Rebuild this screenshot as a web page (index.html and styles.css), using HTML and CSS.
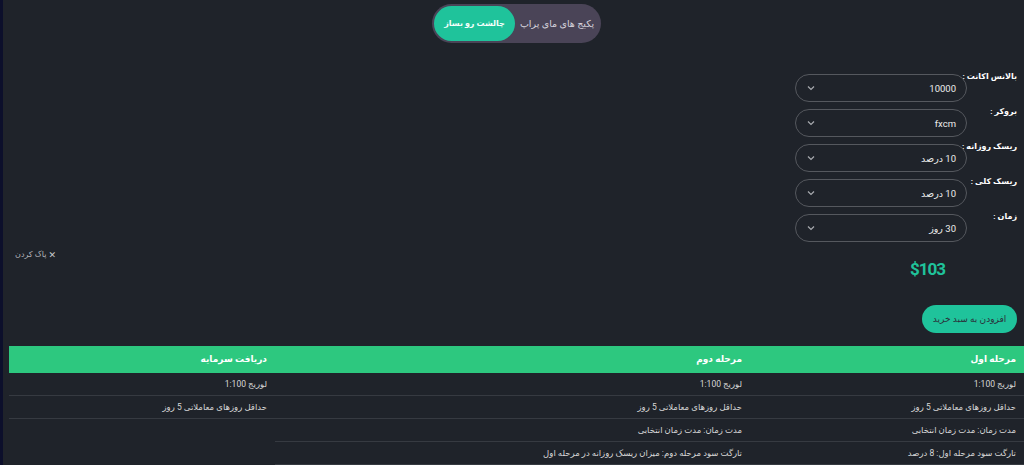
FILE: index.html
```html
<!DOCTYPE html>
<html lang="fa" dir="rtl">
<head>
  <meta charset="UTF-8" />
  <meta name="viewport" content="width=device-width, initial-scale=1.0" />
  <title>چالشت رو بساز</title>
  <link rel="stylesheet" href="styles.css">
</head>
<body>
  <div class="page">

    <div class="tabs-wrap">
      <nav class="tabs">
        <button class="tab">پکیج های مای پراپ</button>
        <button class="tab active">چالشت رو بساز</button>
      </nav>
    </div>

    <section class="builder">
      <div class="form">
        <div class="field">
          <label>بالانس اکانت :</label>
          <div class="select">
            <span>10000</span>
            <svg width="8" height="6" viewBox="0 0 8 6"><polyline points="1,1.5 4,4.5 7,1.5" /></svg>
          </div>
        </div>
        <div class="field">
          <label>بروکر :</label>
          <div class="select">
            <span>fxcm</span>
            <svg width="8" height="6" viewBox="0 0 8 6"><polyline points="1,1.5 4,4.5 7,1.5" /></svg>
          </div>
        </div>
        <div class="field">
          <label>ریسک روزانه :</label>
          <div class="select">
            <span>10 درصد</span>
            <svg width="8" height="6" viewBox="0 0 8 6"><polyline points="1,1.5 4,4.5 7,1.5" /></svg>
          </div>
        </div>
        <div class="field">
          <label>ریسک کلی :</label>
          <div class="select">
            <span>10 درصد</span>
            <svg width="8" height="6" viewBox="0 0 8 6"><polyline points="1,1.5 4,4.5 7,1.5" /></svg>
          </div>
        </div>
        <div class="field">
          <label>زمان :</label>
          <div class="select">
            <span>30 روز</span>
            <svg width="8" height="6" viewBox="0 0 8 6"><polyline points="1,1.5 4,4.5 7,1.5" /></svg>
          </div>
        </div>

        <div class="price">$103</div>
        <button class="add">افزودن به سبد خرید</button>
      </div>

      <div class="side">
        <a class="clear" href="#"><span class="x">✕</span><span>پاک کردن</span></a>
      </div>
    </section>

    <section class="plans">
      <div class="col">
        <div class="col-head">مرحله اول</div>
        <div class="item">لوریج 1:100</div>
        <div class="item">حداقل روزهای معاملاتی 5 روز</div>
        <div class="item">مدت زمان: مدت زمان انتخابی</div>
        <div class="item">تارگت سود مرحله اول: 8 درصد</div>
      </div>
      <div class="col">
        <div class="col-head">مرحله دوم</div>
        <div class="item">لوریج 1:100</div>
        <div class="item">حداقل روزهای معاملاتی 5 روز</div>
        <div class="item">مدت زمان: مدت زمان انتخابی</div>
        <div class="item">تارگت سود مرحله دوم: میزان ریسک روزانه در مرحله اول</div>
      </div>
      <div class="col">
        <div class="col-head">دریافت سرمایه</div>
        <div class="item">لوریج 1:100</div>
        <div class="item">حداقل روزهای معاملاتی 5 روز</div>
      </div>
    </section>

  </div>
</body>
</html>
```

FILE: styles.css
```css
html {
  background-color: #1f232a;
}

body {
  margin: 0;
  min-height: 100vh;
  border-left: 3px solid #0c0f2b;
  font-family: Roboto, "DejaVu Sans", sans-serif;
  color: #dcdcdc;
}

.page {
  padding: 4px 0 0 6px;
}

/* top switch */
.tabs-wrap {
  display: flex;
  justify-content: center;
}

.tabs {
  display: flex;
  padding: 2px;
  border-radius: 20px;
  background-color: #4a4457;
}

.tab {
  height: 35px;
  width: 84px;
  padding: 0;
  border: none;
  border-radius: 18px;
  background: transparent;
  font-family: inherit;
  font-size: 9.5px;
  color: #d6d3dc;
  cursor: pointer;
}

.tab.active {
  width: 81px;
  background-color: #1fc39b;
  color: #f4fffb;
  font-size: 8px;
  font-weight: bold;
}

/* builder */
.builder {
  display: flex;
  justify-content: space-between;
  margin-top: 27px;
  padding-right: 7px;
}

.form {
  display: flex;
  flex-direction: column;
  width: 222px;
}

.field {
  display: flex;
  align-items: flex-start;
  height: 35px;
}

.field label {
  width: 50px;
  padding-top: 1px;
  font-size: 8px;
  font-weight: bold;
  line-height: 12px;
  color: #fff;
  white-space: nowrap;
}

.select {
  display: flex;
  align-items: center;
  justify-content: space-between;
  box-sizing: border-box;
  width: 172px;
  height: 28px;
  margin-top: 4px;
  padding: 0 10px 0 11px;
  border: 1px solid #55585e;
  border-radius: 14px;
  font-size: 9.5px;
  color: #ececec;
}

.select svg polyline {
  fill: none;
  stroke: #a9abb0;
  stroke-width: 1.2;
}

.price {
  margin-top: 13px;
  padding-right: 72px;
  font-size: 17px;
  line-height: 22px;
  font-weight: bold;
  letter-spacing: -1px;
  color: #1fc39b;
  direction: ltr;
  text-align: right;
}

.add {
  align-self: flex-start;
  width: 95px;
  height: 28px;
  margin-top: 25px;
  border: none;
  border-radius: 14px;
  background-color: #1fc39b;
  font-family: inherit;
  font-size: 9px;
  color: #2b2f3a;
  cursor: pointer;
}

.side {
  padding: 179px 6px 0 0;
  margin-left: 6px;
}

.clear {
  display: flex;
  align-items: center;
  gap: 2px;
  font-size: 8px;
  line-height: 12px;
  color: #b3b5ba;
  text-decoration: none;
}

.clear .x {
  font-size: 9px;
  color: #c8c9cc;
}

/* plans table */
.plans {
  display: grid;
  grid-template-columns: 274px 475px 1fr;
  margin-top: 13px;
}

.col-head {
  height: 27px;
  padding: 0 8px;
  line-height: 27px;
  background-color: #2dc87f;
  font-size: 9px;
  font-weight: bold;
  color: #fff;
}

.item {
  height: 22px;
  padding: 0 8px;
  line-height: 22px;
  border-bottom: 1px solid #363a41;
  font-size: 8.5px;
  color: #d7d7d7;
  white-space: nowrap;
}
```
